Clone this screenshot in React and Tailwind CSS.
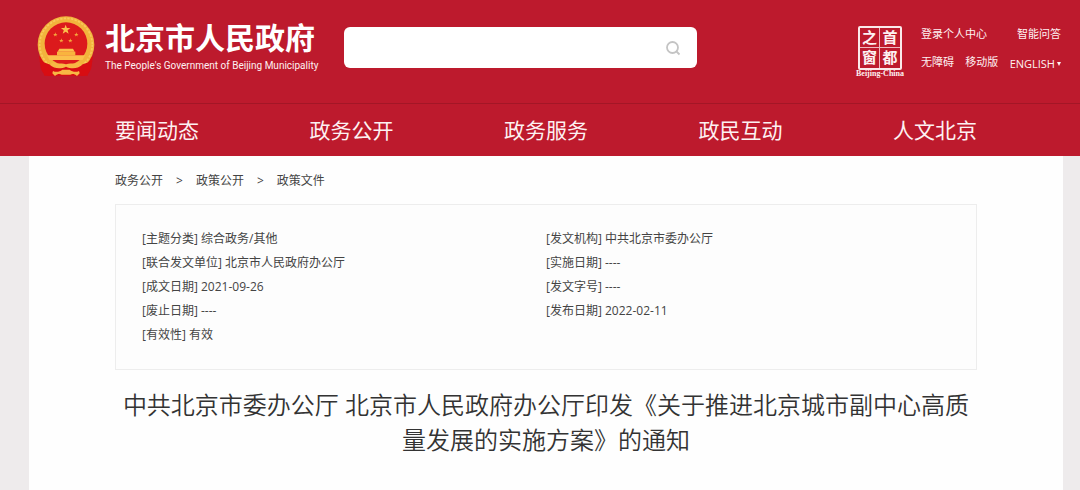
import { useState } from "react";

const navItems = ["要闻动态", "政务公开", "政务服务", "政民互动", "人文北京"];

const breadcrumbs = ["政务公开", "政策公开", "政策文件"];

const leftDetails = [
  { label: "主题分类", value: "综合政务/其他" },
  { label: "联合发文单位", value: "北京市人民政府办公厅" },
  { label: "成文日期", value: "2021-09-26" },
  { label: "废止日期", value: "----" },
  { label: "有效性", value: "有效" },
];

const rightDetails = [
  { label: "发文机构", value: "中共北京市委办公厅" },
  { label: "实施日期", value: "----" },
  { label: "发文字号", value: "----" },
  { label: "发布日期", value: "2022-02-11" },
];

const STAR = "M0 -10 L2.4 -3.2 9.5 -3.1 3.8 1.2 5.9 8.1 0 4 -5.9 8.1 -3.8 1.2 -9.5 -3.1 -2.4 -3.2Z";

function Emblem() {
  return (
    <svg viewBox="24 17 174 186" className="h-[62px] w-[58px] shrink-0" aria-hidden="true">
      {/* Drapes */}
      <path d="M30 138 L72 150 H150 L192 138 L188 163 C188 180 178 194 160 197 L138 190 H84 L62 197 C44 194 34 180 34 163Z" fill="#d80d12" />
      {/* Wreath */}
      <circle cx="111" cy="103" r="85" fill="#f2b33c" />
      <circle cx="111" cy="103" r="79" fill="none" stroke="#f8c95c" strokeWidth="5" strokeDasharray="7 4" />
      <circle cx="111" cy="100" r="64" fill="#dc1a1c" />
      <path d="M32 152 L78 168 L111 160 L144 168 L190 152 L176 196 H46Z" fill="#d80d12" />
      {/* Stars */}
      <path d={STAR} transform="translate(110 58) scale(1.5)" fill="#fbc04c" />
      <path d={STAR} transform="translate(79 73) scale(.7)" fill="#f5a83c" />
      <path d={STAR} transform="translate(142 73) scale(.7)" fill="#f5a83c" />
      <path d={STAR} transform="translate(97 91) scale(.7)" fill="#f5a83c" />
      <path d={STAR} transform="translate(124 91) scale(.7)" fill="#f5a83c" />
      {/* Gate */}
      <path d="M91 115 H132 L137 124 H86Z" fill="#fbc04c" />
      <path d="M84 124 H139 V135 H84Z" fill="#f9b43e" />
      <path d="M54 135 H168 L161 149 H61Z" fill="#fbc04c" />
      {/* Ribbon */}
      <path d="M74 155 C86 164 98 156 111 162 C124 156 136 164 148 155 L160 163 C146 176 126 176 111 169 C96 176 76 176 62 163Z" fill="#f7b844" />
      <path d="M72 182 C82 187 92 184 100 178 H122 C130 184 140 187 150 182 L152 189 L144 197 C136 190 130 190 124 193 H98 C92 190 86 190 78 197 L70 189Z" fill="#f7b844" />
    </svg>
  );
}

function Seal() {
  return (
    <a href="#" className="flex w-[46px] flex-col items-center">
      <span className="grid size-[44px] grid-cols-2 grid-rows-2 rounded-xs border-2 border-[#fbe9ea] text-center text-[15px] leading-[19px] font-bold">
        <span className="border-r border-b border-[#f0b9bf]">之</span>
        <span className="border-b border-[#f0b9bf]">首</span>
        <span className="border-r border-[#f0b9bf]">窗</span>
        <span>都</span>
      </span>
      <span className="font-['Liberation_Serif',serif] text-[8px] leading-[8px] font-bold whitespace-nowrap">
        Beijing-China
      </span>
    </a>
  );
}

function DetailList({ items }) {
  return (
    <ul>
      {items.map((item) => (
        <li key={item.label}>
          [{item.label}] {item.value}
        </li>
      ))}
    </ul>
  );
}

export default function App() {
  const [query, setQuery] = useState("");

  return (
    <div className="min-h-screen bg-[#eeebec] font-['Open_Sans','Noto_Sans_CJK_SC',sans-serif] text-[#444]">
      <div className="bg-[#bd1a2d] text-[#fdf1f2]">
        {/* Header */}
        <header className="border-b border-[#a31626] pr-[19px] pl-[29px]">
          <div className="flex h-[103px] items-start pl-2">
            <a href="#" className="mt-4 flex items-start gap-2.5">
              <Emblem />
              <span className="flex flex-col pt-1">
                <span className="text-[30px] leading-9 font-bold whitespace-nowrap text-white">
                  北京市人民政府
                </span>
                <span className="font-[Roboto,sans-serif] text-[10px] leading-5 whitespace-nowrap">
                  The People's Government of Beijing Municipality
                </span>
              </span>
            </a>

            <form
              className="mt-[27px] ml-[26px] flex h-[41px] max-w-[353px] flex-1 items-center rounded-md bg-white pr-4 pl-3"
              onSubmit={(e) => e.preventDefault()}
            >
              <input
                type="search"
                aria-label="搜索"
                value={query}
                onChange={(e) => setQuery(e.target.value)}
                className="min-w-0 flex-1 text-sm text-gray-700 outline-none"
              />
              <button type="submit" aria-label="搜索">
                <svg viewBox="0 0 16 16" className="size-4" fill="none" stroke="#c4c4c4" strokeWidth="1.8">
                  <circle cx="7.5" cy="7.5" r="5.5" />
                  <path d="M11.5 11.5 L14.5 14.5" />
                </svg>
              </button>
            </form>

            <div className="mt-[26px] ml-auto flex items-start gap-[18px]">
              <Seal />
              <div className="w-[140px] text-[11px] leading-4 whitespace-nowrap">
                <div className="flex justify-between">
                  <a href="#">登录个人中心</a>
                  <a href="#">智能问答</a>
                </div>
                <div className="mt-2.5 flex items-center justify-between">
                  <a href="#">无障碍</a>
                  <a href="#">移动版</a>
                  <button type="button" className="flex items-center gap-0.5 pt-1">
                    ENGLISH
                    <svg viewBox="0 0 4 4" className="size-1" fill="currentColor">
                      <path d="M0 0 H4 L2 4Z" />
                    </svg>
                  </button>
                </div>
              </div>
            </div>
          </div>
        </header>

        {/* Navigation */}
        <nav className="pr-[17px] pl-[29px]">
          <ul className="mx-auto flex max-w-[862px] justify-between text-[21px] leading-[52px]">
            {navItems.map((item) => (
              <li key={item}>
                <a href="#">{item}</a>
              </li>
            ))}
          </ul>
        </nav>
      </div>

      {/* Document */}
      <div className="pr-[17px] pl-[29px]">
        <main className="min-h-[334px] bg-[#fefefe] pb-8">
          <div className="mx-auto max-w-[862px]">
            <nav className="flex gap-[13px] pt-[13px] text-xs leading-6">
              {breadcrumbs.map((crumb, i) => (
                <span key={crumb} className="flex gap-[13px]">
                  {i > 0 && <span>&gt;</span>}
                  <a href="#">{crumb}</a>
                </span>
              ))}
            </nav>

            <section className="mt-[11px] grid grid-cols-2 border border-[#ededed] bg-[#fdfdfd] px-[26px] py-[22px] text-xs leading-6">
              <DetailList items={leftDetails} />
              <DetailList items={rightDetails} />
            </section>

            <h1 className="mt-[17px] text-center text-2xl leading-[35px] font-[350] text-[#333]">
              中共北京市委办公厅 北京市人民政府办公厅印发《关于推进北京城市副中心高质量发展的实施方案》的通知
            </h1>
          </div>
        </main>
      </div>
    </div>
  );
}
